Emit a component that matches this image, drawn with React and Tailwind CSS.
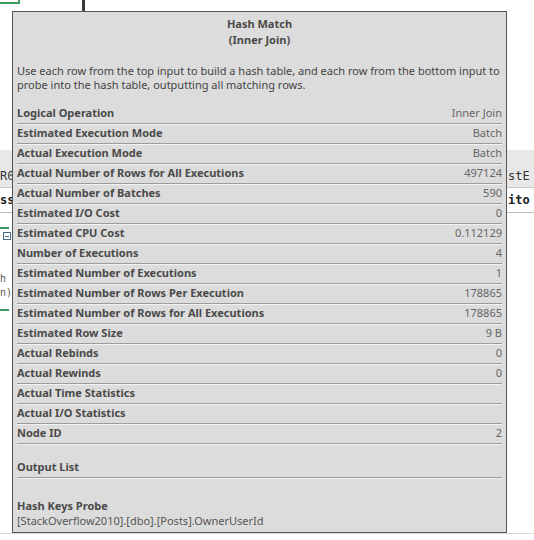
import React from "react";

const rows = [
    ["Logical Operation", "Inner Join"],
    ["Estimated Execution Mode", "Batch"],
    ["Actual Execution Mode", "Batch"],
    ["Actual Number of Rows for All Executions", "497124"],
    ["Actual Number of Batches", "590"],
    ["Estimated I/O Cost", "0"],
    ["Estimated CPU Cost", "0.112129"],
    ["Number of Executions", "4"],
    ["Estimated Number of Executions", "1"],
    ["Estimated Number of Rows Per Execution", "178865"],
    ["Estimated Number of Rows for All Executions", "178865"],
    ["Estimated Row Size", "9 B"],
    ["Actual Rebinds", "0"],
    ["Actual Rewinds", "0"],
    ["Actual Time Statistics", ""],
    ["Actual I/O Statistics", ""],
    ["Node ID", "2"],
];

const App = () => {
    return (
        <div className="relative w-[534px] h-[540px] bg-white overflow-hidden font-['Noto_Sans',sans-serif]">
            {/* plan canvas behind the tooltip */}
            <div className="absolute left-0 top-0 w-[20px] h-[4px] border-r-2 border-b-2 border-[#3c9a5f]" />
            <div className="absolute left-[82px] top-0 w-[3px] h-[12px] bg-[#3a3a3a]" />

            <div className="absolute left-0 top-[150px] w-full font-['DejaVu_Sans_Mono',monospace] text-[12px]">
                <div className="h-[38px] bg-[#e8e8e8] border-b border-[#c8c8c8] flex items-end pb-[2px] text-[#333]">
                    <span className="w-[12px] overflow-hidden whitespace-nowrap">R0</span>
                    <span className="ml-auto w-[26px] whitespace-nowrap">stE</span>
                </div>
                <div className="h-[25px] bg-white border-b border-[#bbb] flex items-center font-bold text-[#222]">
                    <span className="w-[12px] overflow-hidden whitespace-nowrap">ss</span>
                    <span className="ml-auto w-[26px] whitespace-nowrap">ito</span>
                </div>
            </div>

            <div className="absolute left-0 top-[227px] w-[9px] h-[2px] bg-[#3c9a5f]" />
            <div className="absolute left-[3px] top-[232px] w-[8px] h-[8px] border border-[#4a6a8a] flex items-center justify-center">
                <div className="w-[4px] h-px bg-[#4a6a8a]" />
            </div>
            <div className="absolute left-0 top-[272px] font-['DejaVu_Sans_Mono',monospace] text-[10px] leading-[14px] text-[#555]">
                <div>h</div>
                <div>n)</div>
            </div>
            <div className="absolute left-0 top-[309px] w-[9px] h-[2px] bg-[#3c9a5f]" />
            <div className="absolute left-0 top-[533px] w-full h-px bg-[#d8d8d8]" />

            {/* tooltip */}
            <div className="absolute left-[12px] top-[11px] w-[495px] h-[522px] bg-[#dcdcdc] border border-[#555] px-[4px] text-[#4a4a4a]">
                <div className="pt-[4px] text-center font-bold text-[11px] leading-[16px]">
                    <div>Hash Match</div>
                    <div>(Inner Join)</div>
                </div>

                <p className="mt-[16px] text-[11px] leading-[14px] text-[#444]">
                    Use each row from the top input to build a hash table, and each row from the bottom input to probe into the hash table, outputting all matching rows.
                </p>

                <div className="mt-[12px]">
                    {rows.map(([label, value]) => (
                        <div
                            key={label}
                            className="h-[20px] flex items-center justify-between border-b border-[#9c9c9c] shadow-[0_1px_0_#f2f2f2] text-[11px]"
                        >
                            <span className="font-bold">{label}</span>
                            <span className="text-[#666]">{value}</span>
                        </div>
                    ))}
                </div>

                <div className="mt-[13px] h-[21px] flex items-center font-bold text-[11px] border-b border-[#9c9c9c] shadow-[0_1px_0_#f2f2f2]">
                    Output List
                </div>

                <div className="mt-[20px] text-[11px] leading-[15px]">
                    <div className="font-bold">Hash Keys Probe</div>
                    <div className="text-[#555]">[StackOverflow2010].[dbo].[Posts].OwnerUserId</div>
                </div>
            </div>
        </div>
    );
};

export default App;
